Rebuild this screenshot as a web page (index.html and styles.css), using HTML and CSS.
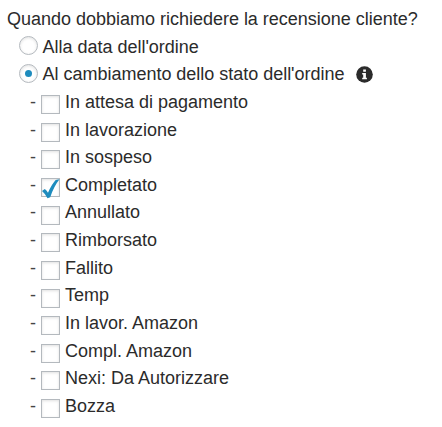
FILE: index.html
```html
<!DOCTYPE html>
<html lang="it">
<head>
<meta charset="utf-8">
<title>Recensione cliente</title>
<link rel="stylesheet" href="styles.css">
</head>
<body>
<main class="settings">
  <p class="question">Quando dobbiamo richiedere la recensione cliente?</p>
  <label class="option"><span class="radio"></span><span>Alla data dell'ordine</span></label>
  <label class="option"><span class="radio checked"></span><span>Al cambiamento dello stato dell'ordine</span>
    <svg class="info" viewBox="0 0 17 17"><circle cx="8.5" cy="8.5" r="8.3" fill="#2b2b2b"/><path d="M7.200 3.500h2.700v2.300H7.200zM6.200 7h3.700v4.700h1v1.600H6.200v-1.600h1V8.500h-1z" fill="#fff"/></svg>
  </label>
  <ul class="states">
    <li><span class="dash">-</span><span class="box"></span>In attesa di pagamento</li>
    <li><span class="dash">-</span><span class="box"></span>In lavorazione</li>
    <li><span class="dash">-</span><span class="box"></span>In sospeso</li>
    <li><span class="dash">-</span><span class="box"><svg class="tick" viewBox="0 0 20 22"><path d="M1 14L3.800 12Q5.500 13.200 7 15.700Q10.500 7.500 14.700 3L18.500 2.300Q12.800 9.500 9.200 20.300L6.500 21.200Q4.500 17 1 14Z" fill="#1e8cbe"/></svg></span>Completato</li>
    <li><span class="dash">-</span><span class="box"></span>Annullato</li>
    <li><span class="dash">-</span><span class="box"></span>Rimborsato</li>
    <li><span class="dash">-</span><span class="box"></span>Fallito</li>
    <li><span class="dash">-</span><span class="box"></span>Temp</li>
    <li><span class="dash">-</span><span class="box"></span>In lavor. Amazon</li>
    <li><span class="dash">-</span><span class="box"></span>Compl. Amazon</li>
    <li><span class="dash">-</span><span class="box"></span>Nexi: Da Autorizzare</li>
    <li><span class="dash">-</span><span class="box"></span>Bozza</li>
  </ul>
</main>
</body>
</html>
```
FILE: styles.css
```css
* { box-sizing: border-box; }
body { margin: 0; background: #fff; color: #2b2b2b; font-family: "Liberation Sans", Arial, sans-serif; font-size: 18px; line-height: 27.64px; }
.settings { padding: 6px 0 0 7px; }
.question { margin: 0; white-space: nowrap; letter-spacing: -0.01px; }
.option { display: flex; align-items: center; padding-left: 12px; height: 27.64px; white-space: nowrap; letter-spacing: -0.02px; }
.radio { display: flex; align-items: center; justify-content: center; width: 19px; height: 19px; margin: -3px 4.600px 0 0; border: 1px solid #b4b9be; border-radius: 50%; box-shadow: inset 0 1px 3px rgba(0, 0, 0, 0.12); }
.checked::after { content: ""; width: 7px; height: 7px; margin-right: 1px; border-radius: 50%; background: #1e8cbe; }
.info { width: 17px; height: 17px; margin: -2px 0 0 11.400px; }
.states { margin: 0; padding: 0 0 0 23px; list-style: none; }
.states li { display: flex; align-items: center; height: 27.64px; white-space: nowrap; }
.dash { width: 11px; color: #444; }
.box { position: relative; width: 19px; height: 19px; margin-right: 5px; border: 1px solid #b4b9be; top: 2px; box-shadow: inset 0 1px 3px rgba(0, 0, 0, 0.12); }
.tick { position: absolute; left: -1px; top: -2px; width: 20px; height: 22px; }
```
